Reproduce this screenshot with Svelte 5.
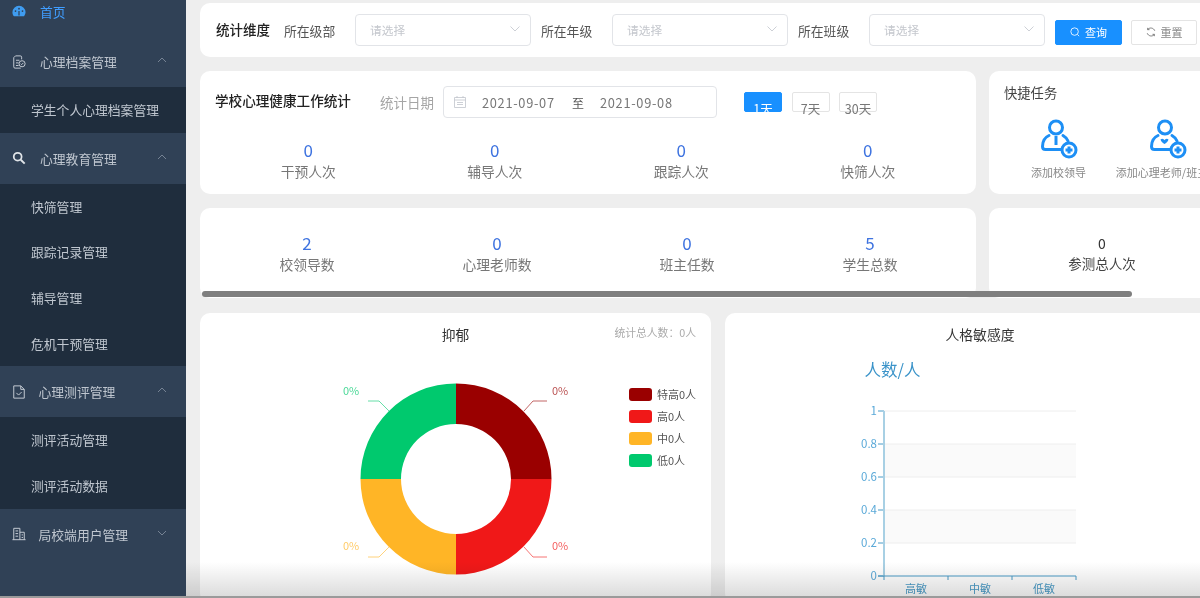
<script>
  const statsTop = [
    { value: 0, label: "干预人次" },
    { value: 0, label: "辅导人次" },
    { value: 0, label: "跟踪人次" },
    { value: 0, label: "快筛人次" },
  ];
  const statsBottom = [
    { value: 2, label: "校领导数" },
    { value: 0, label: "心理老师数" },
    { value: 0, label: "班主任数" },
    { value: 5, label: "学生总数" },
  ];
  const groups = [
    { title: "心理档案管理", icon: "file", open: true, subs: ["学生个人心理档案管理"] },
    { title: "心理教育管理", icon: "search", open: true, subs: ["快筛管理", "跟踪记录管理", "辅导管理", "危机干预管理"] },
    { title: "心理测评管理", icon: "check", open: true, tight: true, subs: ["测评活动管理", "测评活动数据"] },
    { title: "局校端用户管理", icon: "building", open: false, tight: true, subs: [] },
  ];
  const selects = ["所在级部", "所在年级", "所在班级"];
  const ranges = ["1天", "7天", "30天"];
  const quick = [
    { label: "添加校领导", kind: "tie" },
    { label: "添加心理老师/班主任", kind: "heart" },
  ];
  const legend = [
    { label: "特高0人", color: "#9a0000" },
    { label: "高0人", color: "#f01818" },
    { label: "中0人", color: "#ffb526" },
    { label: "低0人", color: "#00c96e" },
  ];
  // 四个象限，圆心 (256,122)，外径 95.5，内径 55
  const slices = [
    { color: "#9a0000", d: "M256 26.500A95.500 95.500 0 0 1 351.500 122H311A55 55 0 0 0 256 67Z" },
    { color: "#f01818", d: "M351.500 122A95.500 95.500 0 0 1 256 217.500V177A55 55 0 0 0 311 122Z" },
    { color: "#ffb526", d: "M256 217.500A95.500 95.500 0 0 1 160.500 122H201A55 55 0 0 0 256 177Z" },
    { color: "#00c96e", d: "M160.500 122A95.500 95.500 0 0 1 256 26.500V67A55 55 0 0 0 201 122Z" },
  ];
  const leaders = [
    { color: "#9a0000", points: "324,54 333,44 347,44", x: 352, y: 38 },
    { color: "#f01818", points: "324,190 333,200 347,200", x: 352, y: 193 },
    { color: "#ffb526", points: "189,190 179,200 168,200", x: 143, y: 193 },
    { color: "#00c96e", points: "189,54 179,44 168,44", x: 143, y: 38 },
  ];
  const ticks = [
    { label: "1", y: 54 },
    { label: "0.8", y: 87 },
    { label: "0.6", y: 120 },
    { label: "0.4", y: 153 },
    { label: "0.2", y: 186 },
    { label: "0", y: 219 },
  ];
  const cats = [
    { label: "高敏", x: 191 },
    { label: "中敏", x: 255 },
    { label: "低敏", x: 319 },
  ];
</script>

<div class="page">
  <aside class="side">
    <div class="home">
      <svg class="ico" viewBox="0 0 16 14">
        <path fill="#3f9cf0" d="M8 1a7.5 7.5 0 0 0-7.5 7.5c0 1.8.6 3.4 1.7 4.5h11.6a7.4 7.4 0 0 0 1.7-4.5A7.5 7.5 0 0 0 8 1z" />
        <circle cx="4" cy="7" r="1" fill="#304156" />
        <circle cx="8" cy="4.4" r="1" fill="#304156" />
        <circle cx="12" cy="7" r="1" fill="#304156" />
        <path stroke="#304156" stroke-width="1.4" d="M8 7v5" />
      </svg>
      <span class="home-text">首页</span>
    </div>

    {#each groups as g}
      <div class="group-head" class:tight={g.tight}>
        <svg class="ico" viewBox="0 0 16 16" fill="none" stroke="#c8ced6" stroke-width="1.1">
          {#if g.icon === "file"}
            <path d="M11 5V2.5A1.5 1.5 0 0 0 9.500 1H4L2 3v10.500A1.500 1.500 0 0 0 3.500 15H10" />
            <path d="M4.500 6h4M4.500 9h3M4.500 12h3" />
            <circle cx="11.500" cy="10" r="3.500" />
            <path d="M10 10l1 1 2-2" />
          {:else if g.icon === "search"}
            <circle cx="6.500" cy="6.500" r="4.500" stroke="#e0e4e8" stroke-width="2" />
            <path d="M10 10l4.500 4.500" stroke="#e0e4e8" stroke-width="2.200" />
          {:else if g.icon === "check"}
            <path d="M2 1h8l4 4v10H2z" />
            <path d="M10 1v4h4M5 9l2.500 2.500L11 8" />
          {:else}
            <path d="M2 14.500V1.500h7v13M9 6h5v8.500M0.500 14.500h15" />
            <path d="M4 4.500h3M4 7.500h3M4 10.500h3M11 9h1.500M11 12h1.500" />
          {/if}
        </svg>
        <span class="group-title">{g.title}</span>
        <svg class="chev" viewBox="0 0 10 6" fill="none" stroke="#7e8b9b" stroke-width="0.9">
          <path d={g.open ? "M1 5l4-4 4 4" : "M1 1l4 4 4-4"} />
        </svg>
      </div>
      {#if g.subs.length}
        <div class="subs">
          {#each g.subs as s}
            <div class="sub">{s}</div>
          {/each}
        </div>
      {/if}
    {/each}
  </aside>

  <main class="main">
    <section class="card filter">
      <span class="filter-title">统计维度</span>
      {#each selects as s}
        <span class="filter-label">{s}</span>
        <div class="select">
          <span>请选择</span>
          <svg viewBox="0 0 10 6" fill="none" stroke="#c0c4cc" stroke-width="0.8">
            <path d="M0.500 0.500L5 5l4.500-4.500" />
          </svg>
        </div>
      {/each}
      <button class="btn primary">
        <svg viewBox="0 0 12 12" fill="none" stroke="#fff" stroke-width="1">
          <circle cx="5.500" cy="5.500" r="4.500" />
          <path d="M9 9l2 2" />
        </svg>
        查询
      </button>
      <button class="btn">
        <svg viewBox="0 0 12 12" fill="none" stroke="#666" stroke-width="1">
          <path d="M10.500 4.500A5 5 0 0 0 2 3M1.500 7.500A5 5 0 0 0 10 9" />
          <path d="M2 1v2.200h2.200M10 11V8.800H7.800" />
        </svg>
        重置
      </button>
    </section>

    <div class="two-col">
      <section class="card work">
        <div class="work-head">
          <span class="work-title">学校心理健康工作统计</span>
          <span class="date-label">统计日期</span>
          <div class="date">
            <svg viewBox="0 0 12 12" fill="none" stroke="#c0c4cc" stroke-width="0.8">
              <path d="M0.500 1.500h11v10h-11zM0.500 4h11M3 0v2M9 0v2M3 6.500h6M3 8.500h6" />
            </svg>
            <span class="date-val">2021-09-07</span>
            <span class="date-to">至</span>
            <span class="date-val">2021-09-08</span>
          </div>
          <div class="ranges">
            {#each ranges as r, i}
              <div class="range" class:on={i === 0}>{r}</div>
            {/each}
          </div>
        </div>
        <div class="stats">
          {#each statsTop as s}
            <div class="stat">
              <div class="num">{s.value}</div>
              <div class="lab">{s.label}</div>
            </div>
          {/each}
        </div>
      </section>

      <section class="card quick">
        <div class="quick-title">快捷任务</div>
        <div class="quick-row">
          {#each quick as q}
            <div class="quick-item">
              <svg viewBox="0 0 40 40" fill="none" stroke="#1d8ff5" stroke-width="3">
                <circle cx="17" cy="8.500" r="6.500" />
                <path d="M10 16.500C5.500 18.500 3.500 23 3.500 27.500Q3.500 30.500 6.500 30.500H23" stroke-linecap="round" />
                <path d="M24 16.500Q27.500 18.500 29 22" stroke-linecap="round" />
                {#if q.kind === "tie"}
                  <path d="M17 17v9" />
                {:else}
                  <path d="M12.500 20.500c2-1.500 3.500 0 4 .8.500-.8 2-2.300 4-.8-.5 2.500-2.500 3.500-4 4.500-1.500-1-3.500-2-4-4.500z" fill="#1d8ff5" stroke="none" />
                {/if}
                <circle cx="30" cy="31" r="7" fill="#fff" />
                <path d="M30 27.500v7M26.500 31h7" />
              </svg>
              <span>{q.label}</span>
            </div>
          {/each}
        </div>
      </section>
    </div>

    <div class="two-col">
      <section class="card totals">
        {#each statsBottom as s}
          <div class="stat">
            <div class="num">{s.value}</div>
            <div class="lab">{s.label}</div>
          </div>
        {/each}
      </section>
      <section class="card attend">
        <div class="attend-num">0</div>
        <div class="attend-lab">参测总人次</div>
      </section>
    </div>

    <div class="charts">
      <section class="card chart">
        <header class="chart-head">
          <span></span>
          <h3>抑郁</h3>
          <span class="chart-total">统计总人数：0人</span>
        </header>
        <svg class="plot" viewBox="0 0 511 241" width="511" height="241">
          {#each slices as s}
            <path d={s.d} fill={s.color} />
          {/each}
          {#each leaders as l}
            <polyline points={l.points} fill="none" stroke={l.color} stroke-opacity="0.6" />
            <text x={l.x} y={l.y} fill={l.color} fill-opacity="0.7" font-size="11">0%</text>
          {/each}
          {#each legend as item, i}
            <rect x="429" y={31 + i * 22} width="23" height="13" rx="3" fill={item.color} />
            <text x="457" y={42 + i * 22} fill="#555" font-size="11">{item.label}</text>
          {/each}
        </svg>
      </section>

      <section class="card chart">
        <header class="chart-head">
          <span></span>
          <h3>人格敏感度</h3>
          <span></span>
        </header>
        <svg class="plot" viewBox="0 0 510 241" width="510" height="241">
          <text x="139.500" y="19" fill="#3a93c9" font-size="16.500">人数/人</text>
          <rect x="159" y="87" width="192" height="33" fill="#fafafa" />
          <rect x="159" y="153" width="192" height="33" fill="#fafafa" />
          {#each ticks as t}
            {#if t.y !== 219}
              <line x1="159" x2="351" y1={t.y} y2={t.y} stroke="#eee" />
            {/if}
            <line x1="153" x2="159" y1={t.y} y2={t.y} stroke="#4a9cc8" />
            <text x="152" y={t.y + 4} text-anchor="end" fill="#5aa9d8" font-size="11.500">{t.label}</text>
          {/each}
          <line x1="159" x2="159" y1="54" y2="219" stroke="#a8d0e4" stroke-width="2" />
          <line x1="153" x2="351" y1="219" y2="219" stroke="#4a9cc8" />
          {#each [159, 223, 287, 351] as x}
            <line x1={x} x2={x} y1="219" y2="223" stroke="#4a9cc8" />
          {/each}
          {#each cats as c}
            <text x={c.x} y="236" text-anchor="middle" fill="#4a9cc8" font-size="11">{c.label}</text>
          {/each}
        </svg>
      </section>
    </div>
  </main>

  <!-- 横向滚动条和底部阴影都盖在内容之上 -->
  <div class="scrollbar"></div>
  <div class="fade"></div>
  <div class="edge"></div>
</div>

<style>
  :global(body) {
    margin: 0;
    font-family: "Noto Sans CJK SC", "Liberation Sans", sans-serif;
  }

  .page {
    position: relative;
    display: flex;
    width: 1200px;
    height: 598px;
    overflow: hidden;
    background: #eee;
  }

  .side {
    flex: none;
    width: 186px;
    height: 598px;
    background: #304156;
    color: #bfc6cf;
    font-size: 12.800px;
    overflow: hidden;
  }

  .home {
    display: flex;
    align-items: center;
    height: 22px;
    margin-bottom: 14px;
    padding-left: 12px;
  }

  .home-text {
    margin-left: 14px;
    color: #409eff;
  }

  .ico {
    flex: none;
    width: 14px;
    height: 14px;
  }

  .group-head {
    display: flex;
    align-items: center;
    height: 51px;
    padding-left: 12px;
  }

  .group-title {
    margin-left: 14px;
  }

  .tight .group-title {
    margin-left: 12.500px;
  }

  .chev {
    width: 10px;
    height: 6px;
    margin-left: auto;
    margin-right: 19px;
    margin-bottom: 3px;
  }

  .subs {
    background: #1f2d3d;
    padding: 0;
  }

  .sub {
    height: 45.700px;
    line-height: 46px;
    padding-left: 31px;
  }

  .main {
    flex: none;
    width: 1014px;
    padding: 3px 0 0 14px;
    display: flex;
    flex-direction: column;
    gap: 14px;
    color: #555;
    overflow: hidden;
  }

  .card {
    background: #fff;
    border-radius: 10px;
    box-sizing: border-box;
  }

  .filter {
    display: flex;
    align-items: center;
    flex: none;
    width: 1010px;
    height: 54px;
    padding: 0 0 0 16px;
    font-size: 12.800px;
  }

  .filter-title {
    width: 54px;
    margin-right: 14px;
    margin-bottom: 3px;
    font-size: 13.500px;
    font-weight: 500;
    color: #222;
    white-space: nowrap;
  }

  .filter-label {
    width: 51px;
    margin-right: 20px;
    white-space: nowrap;
  }

  .select {
    display: flex;
    align-items: center;
    justify-content: space-between;
    box-sizing: border-box;
    width: 176px;
    height: 32px;
    margin-right: 10px;
    padding: 0 10px 2px 14px;
    border: 1px solid #e2e4e8;
    border-radius: 4px;
    font-size: 11.700px;
    color: #c4c7cd;
  }

  .select svg {
    width: 10px;
    height: 6px;
  }

  .btn {
    display: flex;
    align-items: center;
    justify-content: center;
    gap: 5px;
    box-sizing: border-box;
    width: 66px;
    height: 25px;
    margin: 4px 9px 0 0;
    padding: 0;
    border: 1px solid #e4e4e4;
    border-radius: 2px;
    background: #fff;
    color: #888;
    font: inherit;
    font-size: 11px;
  }

  .btn svg {
    width: 10px;
    height: 10px;
  }

  .btn.primary {
    width: 67px;
    background: #1890ff;
    border-color: #1890ff;
    color: #fff;
  }

  .two-col {
    display: grid;
    grid-template-columns: 776px 300px;
    column-gap: 13px;
    flex: none;
  }

  .work {
    height: 123px;
    padding: 15px 0 0 15px;
  }

  .work-head {
    display: flex;
    align-items: flex-start;
    height: 32px;
  }

  .work-title {
    width: 136px;
    margin: 4px 29px 0 0;
    font-size: 13.600px;
    line-height: 20px;
    font-weight: 500;
    color: #222;
    white-space: nowrap;
  }

  .date-label {
    width: 54px;
    margin: 5px 9px 0 0;
    font-size: 13.500px;
    line-height: 22px;
    color: #a5a5a5;
    white-space: nowrap;
  }

  .date {
    display: flex;
    align-items: center;
    box-sizing: border-box;
    width: 274px;
    height: 32px;
    padding-left: 10px;
    border: 1px solid #e2e4e8;
    border-radius: 4px;
    font-size: 12.800px;
    color: #777;
  }

  .date svg {
    width: 12px;
    height: 12px;
    margin-right: 16px;
  }

  .date-val {
    width: 74px;
    letter-spacing: 0.700px;
    white-space: nowrap;
  }

  .date-to {
    margin: 0 16px;
    font-size: 12px;
    color: #555;
  }

  .ranges {
    display: flex;
    gap: 9.500px;
    margin: 6px 0 0 27px;
  }

  .range {
    box-sizing: border-box;
    width: 38px;
    height: 20px;
    border: 1px solid #e4e4e4;
    border-radius: 2px;
    font-size: 12.500px;
    line-height: 31px;
    text-align: center;
    color: #777;
  }

  .range.on {
    background: #1890ff;
    border-color: #1890ff;
    color: #fff;
  }

  .stats {
    display: grid;
    grid-template-columns: repeat(4, 186.500px);
    margin-top: 21px;
  }

  .stat {
    text-align: center;
  }

  .num {
    font-size: 17px;
    line-height: 22px;
    color: #3e73e0;
  }

  .lab {
    font-size: 13.800px;
    line-height: 20px;
    color: #777;
    white-space: nowrap;
  }

  .quick {
    height: 123px;
    padding: 12px 0 0 15px;
  }

  .quick-title {
    font-size: 13.300px;
    line-height: 20px;
    color: #444;
  }

  .quick-row {
    display: flex;
    margin-top: 16px;
  }

  .quick-item {
    flex: none;
    width: 109px;
    display: flex;
    flex-direction: column;
    align-items: center;
    font-size: 11px;
    color: #888;
    white-space: nowrap;
  }

  .quick-item svg {
    width: 40px;
    height: 40px;
    margin-bottom: 5px;
  }

  .totals {
    display: grid;
    grid-template-columns: 190px 190px 190px 176px;
    height: 90px;
    padding: 24px 0 0 12px;
  }

  .attend {
    height: 90px;
    padding: 25px 74px 0 0;
    text-align: center;
  }

  .attend-num {
    font-size: 14px;
    line-height: 20px;
    color: #333;
  }

  .attend-lab {
    font-size: 13.500px;
    line-height: 20px;
    color: #444;
    white-space: nowrap;
  }

  .charts {
    display: grid;
    grid-template-columns: 511px 510px;
    column-gap: 14px;
    margin-top: 1px;
  }

  .chart {
    height: 290px;
  }

  .chart-head {
    display: grid;
    grid-template-columns: 1fr auto 1fr;
    align-items: start;
    height: 44px;
    padding: 11px 15px 0;
    box-sizing: border-box;
  }

  .chart-head h3 {
    margin: 0;
    font-size: 13.800px;
    line-height: 20px;
    font-weight: 400;
    color: #333;
  }

  .chart-total {
    justify-self: end;
    font-size: 10.800px;
    line-height: 16px;
    color: #aaa;
    white-space: nowrap;
  }

  .plot {
    display: block;
    overflow: visible;
    font-family: "Noto Sans CJK SC", "Liberation Sans", sans-serif;
  }

  .scrollbar {
    position: absolute;
    left: 202px;
    top: 291px;
    width: 930px;
    height: 6px;
    border-radius: 3px;
    background: #7f7f7f;
  }

  .fade {
    position: absolute;
    left: 186px;
    right: 0;
    bottom: 2px;
    height: 34px;
    background: linear-gradient(#fff, #dcdcdc);
    mix-blend-mode: multiply;
  }

  .edge {
    position: absolute;
    left: 0;
    right: 0;
    bottom: 0;
    height: 2px;
    background: #9a9a9a;
  }
</style>
